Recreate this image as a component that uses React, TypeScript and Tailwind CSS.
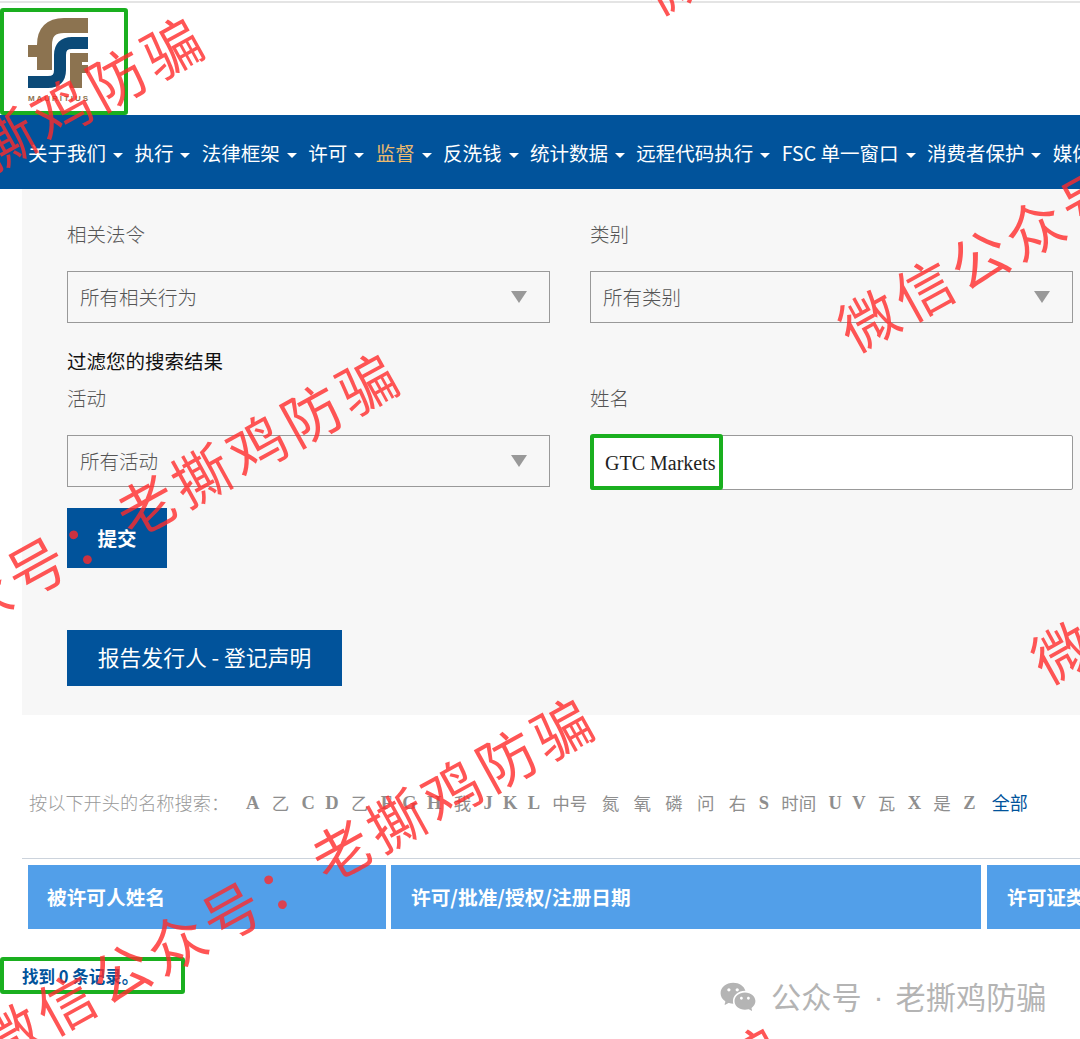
import { RiWechatFill } from 'react-icons/ri';

const sans = "font-['Noto_Sans_CJK_SC','Noto_Sans',sans-serif]";

const navItems = ['关于我们', '执行', '法律框架', '许可', '监督', '反洗钱', '统计数据', '远程代码执行', 'FSC 单一窗口', '消费者保护', '媒体'];

const letters = ['A', '乙', 'C', 'D', '乙', 'F', 'G', 'H', '我', 'J', 'K', 'L', '中号', '氮', '氧', '磷', '问', '右', 'S', '时间', 'U', 'V', '瓦', 'X', '是', 'Z'];

const marks = [
  'left-[-406px] top-[323px]',
  'left-[-211px] top-[659px]',
  'left-[-16px] top-[1004px]',
  'left-[842px] top-[290px]',
  'left-[1035px] top-[622px]',
  'left-[645px] top-[-47px]',
  'left-[174px] top-[1333px]',
];

const Logo = () => (
  <svg viewBox="0 0 80 96" className="w-20 h-24">
    <g fill="none">
      <path d="M68 15.500H44Q24.500 15.500 24.500 35V60" stroke="#8c7350" strokeWidth="15" />
      <path d="M8 41H24" stroke="#8c7350" strokeWidth="12" />
      <path d="M68 33H52Q40 33 40 45V60Q40 72 28 72H8" stroke="#0b4a78" strokeWidth="12" />
      <path d="M68 47.500H50" stroke="#8c7350" strokeWidth="9" />
      <path d="M56 47V78" stroke="#8c7350" strokeWidth="12" />
      <path d="M62 59H68" stroke="#8c7350" strokeWidth="8" />
    </g>
    <text x="8" y="91" fontSize="8" fontWeight="700" textLength="60" fill="#8c7350" fontFamily="Liberation Sans, sans-serif">MAURITIUS</text>
  </svg>
);

const Field = ({ label, value }: { label: string; value: string }) => (
  <div>
    <p className="h-[27px] leading-[27px] text-[19.500px] font-light text-[#555]">{label}</p>
    <div className="mt-[24px] h-[52px] flex items-center justify-between pl-[12px] pr-[22px] border border-[#999] text-[19.500px] font-light text-[#555]">
      <span>{value}</span>
      <span className="w-0 h-0 border-x-[8px] border-x-transparent border-t-[12px] border-t-[#999]" />
    </div>
  </div>
);

export default function App() {
  return (
    <div className={`relative w-[1080px] h-[1039px] overflow-hidden bg-white ${sans}`}>
      {/* header */}
      <div className="h-[115px] pt-[1px]">
        <div className="border-t-2 border-[#e4e4e4] pt-[7px] pl-[20px]">
          <Logo />
        </div>
      </div>

      {/* nav */}
      <nav className="h-[74px] pt-[2px] bg-[#01539b] flex items-center pl-[28px] gap-[11.400px] text-[19.500px] text-white whitespace-nowrap">
        {navItems.map(item => (
          <div key={item} className={`flex items-center gap-[7px] shrink-0 ${item === '监督' ? 'text-[#e9b96e]' : ''}`}>
            <span>{item}</span>
            <span className="mt-[5px] w-0 h-0 border-x-[5px] border-x-transparent border-t-[5px] border-t-white" />
          </div>
        ))}
      </nav>

      {/* filters */}
      <div className="ml-[22px] h-[526px] bg-[#f7f7f7] pt-[31px] pl-[45px]">
        <div className="grid grid-cols-[483px_483px] gap-x-[40px]">
          <Field label="相关法令" value="所有相关行为" />
          <Field label="类别" value="所有类别" />
        </div>
        <p className="mt-[24px] h-[28px] leading-[28px] text-[19.500px] text-[#111]">过滤您的搜索结果</p>
        <div className="mt-[9px] grid grid-cols-[483px_483px] gap-x-[40px]">
          <Field label="活动" value="所有活动" />
          <div>
            <p className="h-[27px] leading-[27px] text-[19.500px] font-light text-[#555]">姓名</p>
            <div className="mt-[24px] h-[55px] flex items-center pl-[14px] border border-[#999] rounded-[2px] bg-white font-['Liberation_Serif',serif] text-[20px] text-[#222]">
              GTC Markets
            </div>
          </div>
        </div>
        <button className="block mt-[18px] w-[100px] h-[60px] bg-[#01539b] text-white text-[19.500px] font-bold">提交</button>
        <button className="block mt-[62px] w-[275px] h-[56px] pb-[2px] bg-[#01539b] text-white text-[21.800px]">报告发行人 - 登记声明</button>
      </div>

      {/* alphabet */}
      <div className="mt-[76px] ml-[29px] h-[24px] flex items-center whitespace-nowrap text-[18.200px] text-[#999]">
        <span className="font-light mr-[17px]">按以下开头的名称搜索：</span>
        <div className="pt-[2px] flex items-center gap-x-[10.300px] font-['Liberation_Serif','Noto_Sans_CJK_SC',serif] font-bold text-[18.500px] text-[#8e8e8e]">
          {letters.map((l, i) => (
            <span key={i} className={/[A-Z]/.test(l) ? '' : 'font-normal text-[17.500px] mx-[2px]'}>{l}</span>
          ))}
          <span className="ml-[6px] font-normal text-[18px] text-[#01539b]">全部</span>
        </div>
      </div>

      {/* table */}
      <div className="mt-[43px] ml-[22px] border-t border-[#ccd3dc] pt-[6px] pl-[6px] flex gap-[5px] text-[19.700px] font-bold text-white whitespace-nowrap">
        <div className="w-[358px] h-[64px] shrink-0 flex items-center pl-[19px] bg-[#529fe9]">被许可人姓名</div>
        <div className="w-[590px] h-[64px] shrink-0 flex items-center pl-[20px] bg-[#529fe9]">许可/批准/授权/注册日期</div>
        <div className="ml-[1px] w-[200px] h-[64px] shrink-0 flex items-center pl-[20px] bg-[#529fe9]">许可证类别</div>
      </div>
      <p className="mt-[34px] ml-[22px] h-[26px] leading-[26px] text-[16.500px] font-bold text-[#01539b]">找到 0 条记录。</p>

      {/* green highlight boxes */}
      <div className="absolute left-0 top-[8px] w-[128px] h-[107px] border-[4px] border-[#1aaf1f] rounded-[3px]" />
      <div className="absolute left-[590px] top-[434px] w-[133px] h-[56px] border-[4px] border-[#1aaf1f] rounded-[3px]" />
      <div className="absolute left-0 top-[957px] w-[185px] h-[37px] border-[4px] border-[#1aaf1f] rounded-[3px]" />

      {/* watermarks */}
      {marks.map(pos => (
        <div key={pos} className={`absolute ${pos} w-[720px] h-[84px] leading-[84px] text-[58px] tracking-[5px] text-[#ff2a2a]/80 whitespace-nowrap rotate-[-29deg] origin-left pointer-events-none`}>
          微信公众号：老撕鸡防骗
        </div>
      ))}

      {/* account badge */}
      <div className="absolute left-[719px] top-[974px] flex items-center text-[30.200px] text-[#b4b4b4] whitespace-nowrap">
        <RiWechatFill className="w-[38px] h-[38px] mr-[14px]" />
        <span>公众号</span>
        <span className="w-[34px] text-center font-['Liberation_Sans',sans-serif]">·</span>
        <span>老撕鸡防骗</span>
      </div>
    </div>
  );
}
